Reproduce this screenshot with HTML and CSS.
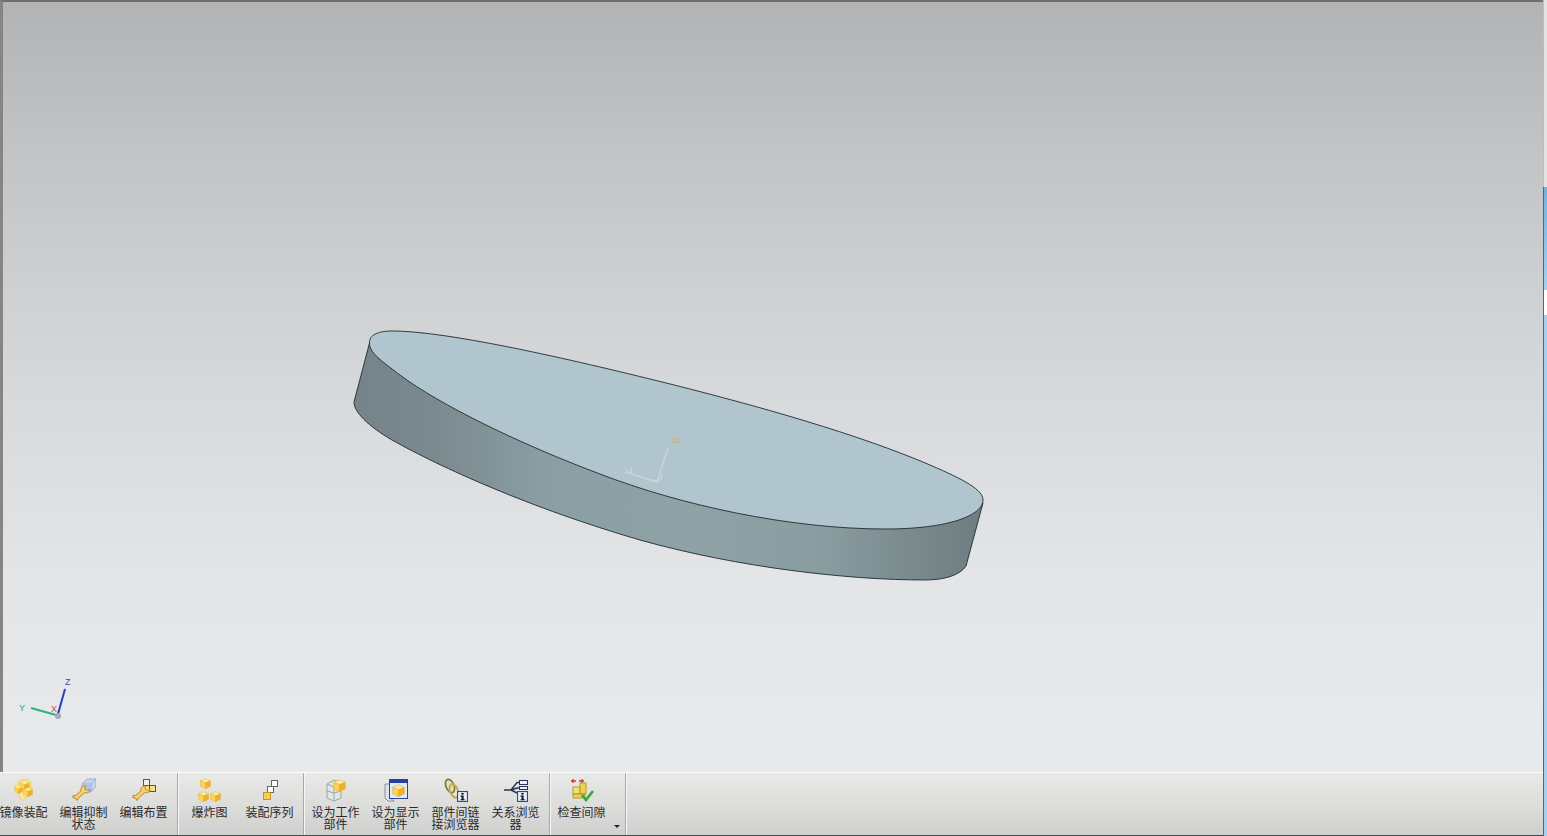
FILE: index.html
```html
<!DOCTYPE html>
<html lang="zh">
<head>
<meta charset="utf-8">
<title>装配</title>
<link rel="stylesheet" href="styles.css">
</head>
<body>
<svg class="defs" width="0" height="0" aria-hidden="true">
  <defs>
    <symbol id="cube" viewBox="0 0 10 10">
      <polygon points="0.500,2.500 5,0.500 9.500,2.500 5,4.500" fill="#ffeb94" stroke="#e2b22e" stroke-width=".4"/>
      <polygon points="0.500,2.500 5,4.500 5,9.800 0.500,7.600" fill="#f9d45a" stroke="#e2b22e" stroke-width=".4"/>
      <polygon points="9.500,2.500 5,4.500 5,9.800 9.500,7.600" fill="#efb02a" stroke="#e2b22e" stroke-width=".4"/>
    </symbol>
    <symbol id="wrench" viewBox="0 0 24 24">
      <path d="M1 20l2.500 0 1.500 2.500 2-3 6-5c2.500 1 5-.5 5-3.500l-2.500 1.500-2.500-1.500.5-3c-3-.5-5.500 2-4.500 4.800l-5.500 4.700-2.500 0z" fill="#f7d069" stroke="#a98532" stroke-width=".9" stroke-linejoin="round"/>
    </symbol>
    <symbol id="info" viewBox="0 0 10 10">
      <rect x=".5" y=".5" width="9" height="9" fill="#e9eef8" stroke="#2c4a9c"/>
      <rect x="4" y="1.800" width="2" height="1.500" fill="#111"/>
      <path d="M3.200 4.200h2.800v3.200h1v1H3.200v-1h1V5.200h-1z" fill="#111"/>
    </symbol>
  </defs>
</svg>
<div class="app">
  <div class="workspace">
    <div class="viewport">
      <svg class="scene" viewBox="3 2 1540 770" role="img" aria-label="模型视图">
        <defs>
          <linearGradient id="side" gradientUnits="userSpaceOnUse" x1="354" y1="0" x2="983" y2="0">
            <stop offset="0" stop-color="#75838a"/>
            <stop offset=".13" stop-color="#7b8a8f"/>
            <stop offset=".3" stop-color="#8a9ea3"/>
            <stop offset=".55" stop-color="#8fa3a7"/>
            <stop offset=".75" stop-color="#899c9f"/>
            <stop offset=".92" stop-color="#76868a"/>
            <stop offset="1" stop-color="#6f7d80"/>
          </linearGradient>
        </defs>
        <path class="disc-side" d="M369.500 343L354 402C354 412 368 426 392 440C440 467 530 508 640 540C740 568 850 580 925 580C945 580 960 575 966 566L983 503L975 500L369.500 343Z"/>
        <path class="disc-top" d="M369.500 343C369 335 378 331 392 331C440 331 540 352 650 379C760 406 860 435 930 465C965 480 983 490 983 500C983 515 950 529 885 529C790 529 680 505 600 474C520 444 440 405 400 375C380 360 369 352 369.500 343Z"/>
        <g class="wcs">
          <path d="M668 448L657 482L625 472"/>
          <path d="M625 467C630 476 632 474 631 467M652 480C660 484 664 476 661 473"/>
        </g>
        <text class="wcs-label" x="672" y="443">ZC</text>
        <line class="axis-y" x1="31" y1="708" x2="56" y2="715"/>
        <line class="axis-z" x1="65" y1="689" x2="58" y2="714"/>
        <circle class="axis-o" cx="58" cy="716" r="3"/>
        <text class="axis-t t-y" x="19" y="711">Y</text>
        <text class="axis-t t-z" x="65" y="685">Z</text>
        <text class="axis-t t-x" x="51" y="712">X</text>
      </svg>
    </div>
    <div class="toolbar">
      <div class="group first">
        <div class="tool">
          <svg class="icon" viewBox="0 0 24 24"><polygon points="3,8 8,2 16,1 20,5 18,13 11,23 8,20 6,13" fill="#fbe6a0" stroke="#f0c868" stroke-width=".7"/><use href="#cube" x="7" y="2" width="11" height="11"/><use href="#cube" x="11" y="9" width="10" height="10"/><use href="#cube" x="2" y="7" width="9" height="9"/></svg>
          <span class="label">镜像装配</span>
        </div>
        <div class="tool">
          <svg class="icon" viewBox="0 0 24 24"><polygon points="10,6 15,1 24,1 24,8 19,14 10,14" fill="#c7d6ee" stroke="#8ba4c8" stroke-width=".8"/><path d="M10 6h9v8M19 6l5-5" fill="none" stroke="#8ba4c8" stroke-width=".8"/><polygon points="10.500,6.500 18.500,6.500 18.500,13.500 10.500,13.500" fill="#aec4e6"/><use href="#wrench" width="24" height="24"/></svg>
          <span class="label">编辑抑制状态</span>
        </div>
        <div class="tool">
          <svg class="icon" viewBox="0 0 24 24"><rect x="11.500" y="1.500" width="6" height="6" fill="#efefef" stroke="#555"/><rect x="11.500" y="7.500" width="6" height="6" fill="#f9de7c" stroke="#555"/><rect x="17.500" y="7.500" width="6" height="6" fill="#f9de7c" stroke="#555"/><use href="#wrench" width="24" height="24"/></svg>
          <span class="label">编辑布置</span>
        </div>
      </div>
      <div class="group">
        <div class="tool">
          <svg class="icon" viewBox="0 0 24 24"><use href="#cube" x="2" y="0" width="11" height="11"/><use href="#cube" x="0" y="13" width="11" height="11"/><use href="#cube" x="12" y="13" width="11" height="11"/></svg>
          <span class="label">爆炸图</span>
        </div>
        <div class="tool">
          <svg class="icon" viewBox="0 0 24 24"><rect x="13.500" y="2.500" width="6" height="6" fill="#fff" stroke="#666"/><rect x="9.500" y="8.500" width="6" height="6" fill="#fff" stroke="#666"/><rect x="5.500" y="14.500" width="7" height="7" fill="#f8cf55" stroke="#c8932a"/></svg>
          <span class="label">装配序列</span>
        </div>
      </div>
      <div class="group">
        <div class="tool">
          <svg class="icon" viewBox="0 0 24 24"><path d="M3 6l7-4 7 2v16l-7 3-7-3z" fill="#e2e6e5" stroke="#9ea5a4" stroke-width="1"/><path d="M3 13l7 2 7-2M10 15v8M3 6l7 3v6" fill="none" stroke="#9ea5a4" stroke-width="1"/><use href="#cube" x="9" y="1" width="13" height="13"/></svg>
          <span class="label">设为工作部件</span>
        </div>
        <div class="tool">
          <svg class="icon" viewBox="0 0 24 24"><path d="M1 6h5v14l4 3H4l-3-3z" fill="#dfe3e8" stroke="#7d88a3" stroke-width=".9"/><rect x="5.500" y="2.500" width="18" height="18" fill="#dcecf9" stroke="#27459c"/><rect x="5" y="1" width="19" height="4" fill="#263fa0"/><use href="#cube" x="8" y="6" width="13" height="13"/></svg>
          <span class="label">设为显示部件</span>
        </div>
        <div class="tool">
          <svg class="icon" viewBox="0 0 24 24"><ellipse cx="6" cy="8" rx="4" ry="7" transform="rotate(-22 6 8)" fill="#e4dfb8" stroke="#7d7638" stroke-width="1.700"/><ellipse cx="10" cy="13" rx="4" ry="7" transform="rotate(-22 10 13)" fill="none" stroke="#bfac5c" stroke-width="2"/><use href="#info" x="13" y="13" width="11" height="11"/></svg>
          <span class="label">部件间链接浏览器</span>
        </div>
        <div class="tool">
          <svg class="icon" viewBox="0 0 24 24"><path d="M0 12h7L13 4.500h6M7 12l6-2h6M7 12l6 3" fill="none" stroke="#2a3358" stroke-width="1.500"/><rect x="15.500" y="2.500" width="8" height="4" fill="#eef1f6" stroke="#2a3358" stroke-width="1"/><rect x="15.500" y="8.500" width="8" height="3" fill="#eef1f6" stroke="#2a3358" stroke-width="1"/><use href="#info" x="13" y="13" width="11" height="11"/></svg>
          <span class="label">关系浏览器</span>
        </div>
      </div>
      <div class="group last">
        <div class="tool">
          <svg class="icon" viewBox="0 0 24 24"><path d="M1 3h5M3 1v4" stroke="#d7362b" stroke-width="1.300" fill="none"/><path d="M9 3h5M12 1v4" stroke="#d7362b" stroke-width="1.300" fill="none"/><rect x="3" y="9" width="7" height="7" fill="#f6e06d" stroke="#a88a24" stroke-width=".8"/><rect x="10" y="5" width="6" height="11" fill="#f0d24e" stroke="#a88a24" stroke-width=".8"/><rect x="3" y="16" width="12" height="4" fill="#efd14a" stroke="#a88a24" stroke-width=".8"/><path d="M12 17l4 5 7-9" fill="none" stroke="#35a83a" stroke-width="2.600"/></svg>
          <span class="label">检查间隙</span>
        </div>
        <span class="more"></span>
      </div>
    </div>
  </div>
  <div class="strip">
    <div class="seg seg-a"></div>
    <div class="seg seg-b"></div>
    <div class="seg seg-c"></div>
    <div class="seg seg-d"></div>
  </div>
</div>
</body>
</html>
```
FILE: styles.css
```css
* { box-sizing: border-box; }
html, body { margin: 0; height: 100%; overflow: hidden; }
body { font-family: "Noto Sans CJK SC", "Liberation Sans", sans-serif; background: #e6e6e6; }
.defs { display: block; height: 0; }
.app { display: flex; height: 836px; }
.workspace { flex: 1; min-width: 0; display: flex; flex-direction: column; }
.viewport {
  height: 772px;
  border-top: 2px solid #6f6f6f;
  border-left: 3px solid #858585;
  background: linear-gradient(180deg, #b2b3b5 0%, #c2c4c6 20%, #d6d8da 50%, #e3e5e7 75%, #e9eaec 100%);
}
.scene { display: block; width: 100%; height: 100%; }
.disc-side { fill: url(#side); stroke: #1f2a30; stroke-width: .9; }
.disc-top { fill: #b0c5cd; stroke: #1f2a30; stroke-width: .9; }
.wcs { fill: none; stroke: #c9d5d6; stroke-width: 1.500; }
.wcs-label { font: 7px "Liberation Sans", sans-serif; fill: #dca868; }
.axis-y { stroke: #2db084; stroke-width: 2; }
.axis-z { stroke: #2a3fb4; stroke-width: 2; }
.axis-o { fill: #a9a9ad; }
.axis-t { font: 9px "Liberation Sans", sans-serif; }
.t-y { fill: #2aa878; }
.t-z { fill: #3a4bb0; }
.t-x { fill: #d0444a; }
.toolbar {
  flex: 1;
  display: flex;
  border-top: 1px solid #fbfbfb;
  border-bottom: 1px solid #454a4e;
  background: linear-gradient(180deg, #e9e9e7 0%, #dcdcda 55%, #cfcfcd 100%);
}
.group {
  display: flex;
  padding-right: 3px;
  border-right: 1px solid #a9a9a9;
  box-shadow: 1px 0 0 #f7f7f7;
  margin-right: 2px;
}
.group.first { margin-left: -6px; }
.group.last { padding-right: 13px; position: relative; }
.tool {
  width: 60px;
  padding-top: 5px;
  display: flex;
  flex-direction: column;
  align-items: center;
}
.tool .label { transform: translateX(-.5px); }
.icon { display: block; width: 24px; height: 24px; flex: none; }
.label {
  width: 48px;
  margin-top: 4px;
  font-size: 12px;
  line-height: 12px;
  color: #2b2b2b;
  text-align: center;
}
.more {
  position: absolute;
  right: 5px;
  bottom: 7px;
  border-left: 3px solid transparent;
  border-right: 3px solid transparent;
  border-top: 3px solid #222;
}
.strip { width: 4px; display: flex; flex-direction: column; }
.seg { border-left: 1px solid #5f6469; }
.seg-a { height: 187px; background: #e4e4e4; border-left-color: #bcbcbc; }
.seg-b { height: 103px; background: linear-gradient(180deg, #6fb4e2, #a5d2f0); }
.seg-c { height: 25px; background: #fff; }
.seg-d { flex: 1; background: #a9d0ef; }
```
